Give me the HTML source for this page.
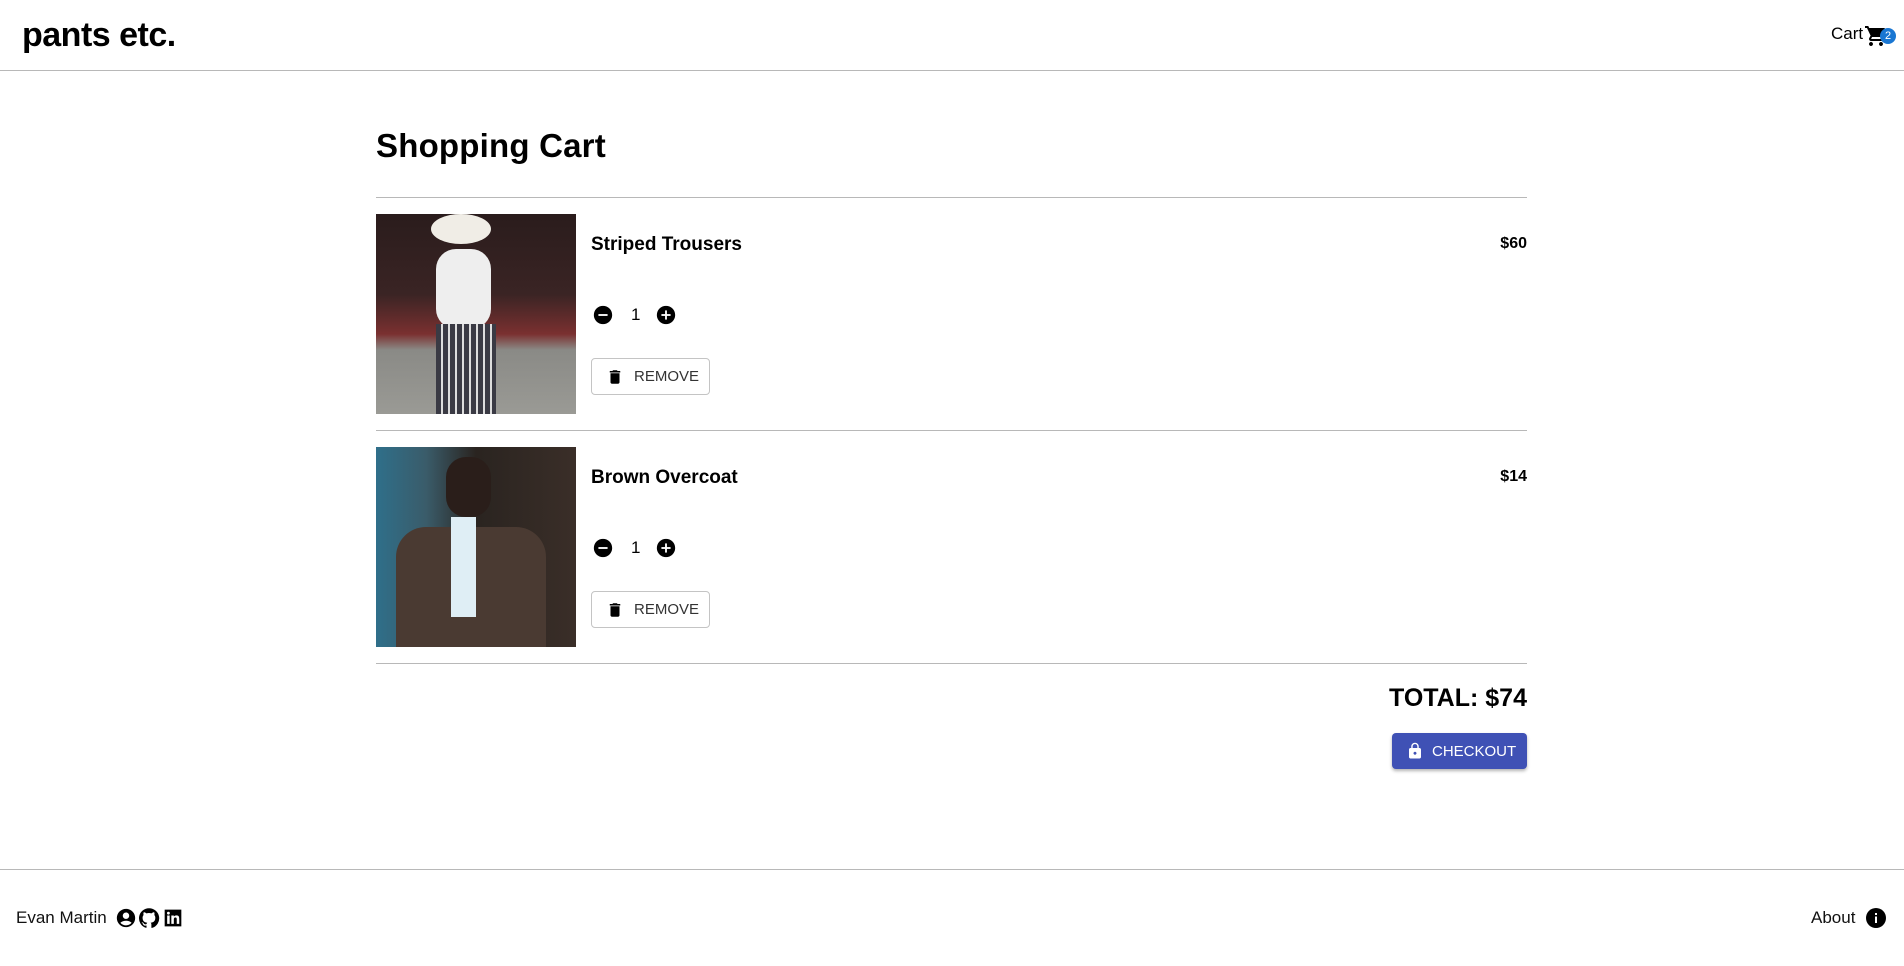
<!DOCTYPE html>
<html><head><meta charset="utf-8"><style>
*{margin:0;padding:0;box-sizing:border-box}
body{width:1904px;height:966px;background:#fff;font-family:"Liberation Sans",sans-serif;color:#000;position:relative;overflow:hidden}
.a{position:absolute}
.hr{position:absolute;height:1px;background:#b8b8b8}
.name{font-weight:bold;font-size:19px}
.price{font-weight:bold;font-size:16px;text-align:right}
.btn{position:absolute;border:1px solid #c4c4c4;border-radius:4px;width:119px;height:37px;font-size:15px;color:#333;display:flex;align-items:center;padding-left:14px}
.btn span{margin-left:10px}
</style></head><body>
<div class="a" style="left:22px;top:16px;font-size:34px;font-weight:bold;letter-spacing:-0.5px">pants etc.</div>
<div class="a" style="left:1831px;top:24px;font-size:17px">Cart</div>
<svg class="a" style="left:1864px;top:24px" width="24" height="24" viewBox="0 0 24 24"><path d="M7 18c-1.1 0-2 .9-2 2s.9 2 2 2 2-.9 2-2-.9-2-2-2zM1 2v2h2l3.6 7.59-1.350 2.45c-.16.28-.25.61-.25.96 0 1.1.9 2 2 2h12v-2H7.42c-.14 0-.25-.11-.25-.25l.03-.12.9-1.63h7.45c.75 0 1.41-.41 1.75-1.03l3.58-6.49A1 1 0 0 0 20 4H5.21l-.94-2H1zm16 16c-1.1 0-2 .9-2 2s.9 2 2 2 2-.9 2-2-.9-2-2-2z"/></svg>
<div class="a" style="left:1880px;top:28px;width:16px;height:16px;border-radius:8px;background:#1976d2;color:#fff;font-size:11px;text-align:center;line-height:16px">2</div>
<div class="hr" style="left:0;top:70px;width:1904px"></div>

<div class="a" style="left:376px;top:127px;font-size:33px;font-weight:bold;letter-spacing:0.2px">Shopping Cart</div>
<div class="hr" style="left:376px;top:197px;width:1151px"></div>

<div class="a" style="left:376px;top:214px;width:200px;height:200px;background:linear-gradient(180deg,#2a1c1c 0%,#3a2424 40%,#7a3030 60%,#8a8a86 68%,#9a9a95 100%)">
<div class="a" style="left:60px;top:35px;width:55px;height:80px;background:#eee;border-radius:20px"></div>
<div class="a" style="left:60px;top:110px;width:60px;height:90px;background:repeating-linear-gradient(90deg,#3a3a44 0 5px,#ddd 5px 7px)"></div>
<div class="a" style="left:55px;top:0;width:60px;height:30px;background:#f0ede6;border-radius:50%"></div>
</div>
<div class="a name" style="left:591px;top:234px">Striped Trousers</div>
<div class="a price" style="left:1427px;width:100px;top:235px">$60</div>
<svg class="a" style="left:592px;top:304px" width="22" height="22" viewBox="0 0 24 24"><circle cx="12" cy="12" r="10"/><rect x="7" y="11" width="10" height="2" fill="#fff"/></svg>
<div class="a" style="left:631px;top:305px;font-size:17px">1</div>
<svg class="a" style="left:655px;top:304px" width="22" height="22" viewBox="0 0 24 24"><circle cx="12" cy="12" r="10"/><rect x="7" y="11" width="10" height="2" fill="#fff"/><rect x="11" y="7" width="2" height="10" fill="#fff"/></svg>
<div class="btn" style="left:591px;top:358px"><svg width="18" height="18" viewBox="0 0 24 24"><path d="M6 19c0 1.1.9 2 2 2h8c1.1 0 2-.9 2-2V7H6v12zM19 4h-3.5l-1-1h-5l-1 1H5v2h14V4z"/></svg><span>REMOVE</span></div>
<div class="hr" style="left:376px;top:430px;width:1151px"></div>

<div class="a" style="left:376px;top:447px;width:200px;height:200px;background:linear-gradient(90deg,#2f6f8a 0%,#3a5c6a 25%,#2a2420 50%,#3a2e28 100%)">
<div class="a" style="left:20px;top:80px;width:150px;height:120px;background:#4a3a32;border-radius:30px 30px 0 0"></div>
<div class="a" style="left:75px;top:70px;width:25px;height:100px;background:#dfeef5"></div>
<div class="a" style="left:70px;top:10px;width:45px;height:60px;background:#2a1e1a;border-radius:20px"></div>
</div>
<div class="a name" style="left:591px;top:467px">Brown Overcoat</div>
<div class="a price" style="left:1427px;width:100px;top:468px">$14</div>
<svg class="a" style="left:592px;top:537px" width="22" height="22" viewBox="0 0 24 24"><circle cx="12" cy="12" r="10"/><rect x="7" y="11" width="10" height="2" fill="#fff"/></svg>
<div class="a" style="left:631px;top:538px;font-size:17px">1</div>
<svg class="a" style="left:655px;top:537px" width="22" height="22" viewBox="0 0 24 24"><circle cx="12" cy="12" r="10"/><rect x="7" y="11" width="10" height="2" fill="#fff"/><rect x="11" y="7" width="2" height="10" fill="#fff"/></svg>
<div class="btn" style="left:591px;top:591px"><svg width="18" height="18" viewBox="0 0 24 24"><path d="M6 19c0 1.1.9 2 2 2h8c1.1 0 2-.9 2-2V7H6v12zM19 4h-3.5l-1-1h-5l-1 1H5v2h14V4z"/></svg><span>REMOVE</span></div>
<div class="hr" style="left:376px;top:663px;width:1151px"></div>

<div class="a" style="left:1327px;width:200px;top:684px;font-size:25px;font-weight:bold;text-align:right">TOTAL: $74</div>
<div class="a" style="left:1392px;top:733px;width:135px;height:36px;background:#3f51b5;border-radius:4px;box-shadow:0 2px 3px rgba(0,0,0,.3);color:#fff;font-size:15px;display:flex;align-items:center;padding-left:14px"><svg width="18" height="18" viewBox="0 0 24 24" fill="#fff"><path d="M18 8h-1V6c0-2.76-2.24-5-5-5S7 3.24 7 6v2H6c-1.1 0-2 .9-2 2v10c0 1.1.9 2 2 2h12c1.1 0 2-.9 2-2V10c0-1.1-.9-2-2-2zm-6 9c-1.1 0-2-.9-2-2s.9-2 2-2 2 .9 2 2-.9 2-2 2zm3.1-9H8.9V6c0-1.71 1.39-3.1 3.1-3.1s3.1 1.39 3.1 3.1v2z"/></svg><span style="margin-left:8px">CHECKOUT</span></div>

<div class="hr" style="left:0;top:869px;width:1904px"></div>
<div class="a" style="left:16px;top:908px;font-size:17px;color:#111">Evan Martin</div>
<svg class="a" style="left:115px;top:907px" width="22" height="22" viewBox="0 0 24 24"><path d="M12 2C6.48 2 2 6.48 2 12s4.48 10 10 10 10-4.48 10-10S17.52 2 12 2zm0 4c1.93 0 3.5 1.57 3.5 3.5S13.930 13 12 13s-3.5-1.57-3.5-3.5S10.07 6 12 6zm0 14c-2.03 0-4.43-.82-6.14-2.88C7.55 15.8 9.68 15 12 15s4.45.8 6.14 2.12C16.43 19.18 14.03 20 12 20z"/></svg>
<svg class="a" style="left:138px;top:907px" width="22" height="22" viewBox="0 0 24 24"><path d="M12 1.3a11 11 0 0 0-3.5 21.4c.6.1.8-.2.8-.5v-2c-3.1.7-3.7-1.3-3.7-1.3-.5-1.3-1.2-1.6-1.2-1.6-1-.7.1-.7.1-.7 1.1.1 1.7 1.1 1.7 1.1 1 1.7 2.6 1.2 3.2.9.1-.7.4-1.2.7-1.5-2.5-.3-5.1-1.2-5.1-5.4 0-1.2.4-2.2 1.1-3-.1-.3-.5-1.4.1-2.9 0 0 .9-.3 3 1.1a10.5 10.5 0 0 1 5.5 0c2.1-1.4 3-1.1 3-1.1.6 1.5.2 2.6.1 2.9.7.8 1.1 1.8 1.1 3 0 4.2-2.6 5.1-5.1 5.4.4.4.8 1.1.8 2.1v3.1c0 .3.2.6.8.5A11 11 0 0 0 12 1.3z"/></svg>
<svg class="a" style="left:163px;top:908px" width="20" height="20" viewBox="0 0 24 24"><path d="M2 2h20v20H2z"/><path fill="#fff" d="M5 9h3v10H5zM6.5 4.5a1.7 1.7 0 1 1 0 3.4 1.7 1.7 0 0 1 0-3.4zM10 9h3v1.4c.5-.9 1.6-1.6 3.1-1.6 3 0 3.4 1.9 3.4 4.4V19h-3v-5c0-1.2 0-2.6-1.6-2.6S13 12.6 13 14v5h-3z"/></svg>
<div class="a" style="left:1811px;top:908px;font-size:17px;color:#111">About</div>
<svg class="a" style="left:1864px;top:906px" width="24" height="24" viewBox="0 0 24 24"><circle cx="12" cy="12" r="10"/><rect x="11" y="10.5" width="2" height="6.5" fill="#fff"/><rect x="11" y="7" width="2" height="2" fill="#fff"/></svg>
</body></html>
